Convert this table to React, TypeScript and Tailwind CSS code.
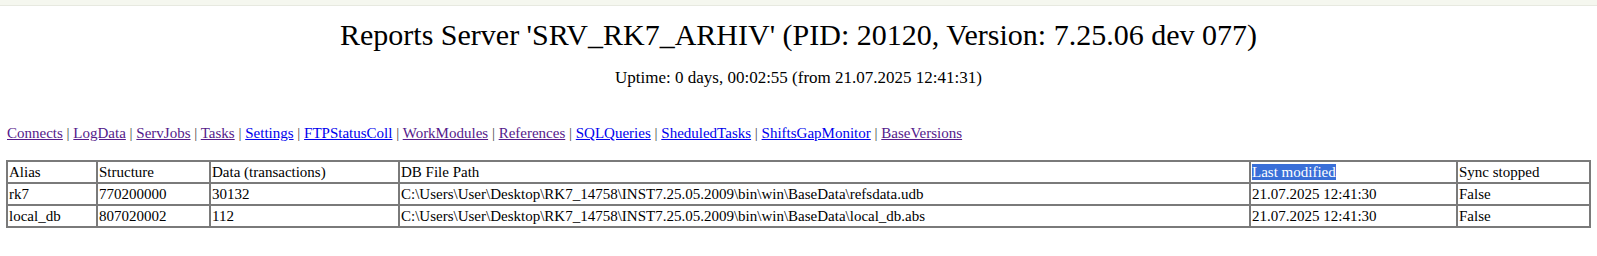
const links: { label: string; visited: boolean }[] = [
  { label: 'Connects', visited: true },
  { label: 'LogData', visited: true },
  { label: 'ServJobs', visited: true },
  { label: 'Tasks', visited: true },
  { label: 'Settings', visited: false },
  { label: 'FTPStatusColl', visited: false },
  { label: 'WorkModules', visited: true },
  { label: 'References', visited: true },
  { label: 'SQLQueries', visited: false },
  { label: 'SheduledTasks', visited: false },
  { label: 'ShiftsGapMonitor', visited: false },
  { label: 'BaseVersions', visited: true },
];

const rows = [
  {
    alias: 'rk7',
    structure: '770200000',
    data: '30132',
    path: 'C:\\Users\\User\\Desktop\\RK7_14758\\INST7.25.05.2009\\bin\\win\\BaseData\\refsdata.udb',
    modified: '21.07.2025 12:41:30',
    stopped: 'False',
  },
  {
    alias: 'local_db',
    structure: '807020002',
    data: '112',
    path: 'C:\\Users\\User\\Desktop\\RK7_14758\\INST7.25.05.2009\\bin\\win\\BaseData\\local_db.abs',
    modified: '21.07.2025 12:41:30',
    stopped: 'False',
  },
];

const cell =
  'border border-[#7a7a7a] px-px py-px text-left font-normal align-top whitespace-nowrap leading-[18px]';

export default function App() {
  return (
    <div className="w-[1597px] h-[256px] bg-white text-black font-['Liberation_Serif','Times_New_Roman',serif] text-[15px] leading-[1.15] overflow-hidden">
      <div className="h-[6px] bg-[#f5f7ef] border-b border-[#e7e9e0]" />

      <h1 className="mt-[12px] text-center text-[30px] leading-[1.15]">
        Reports Server 'SRV_RK7_ARHIV' (PID: 20120, Version: 7.25.06 dev 077)
      </h1>

      <p className="mt-[15px] text-center text-[17px]">Uptime: 0 days, 00:02:55 (from 21.07.2025 12:41:31)</p>

      <p className="mt-[38px] px-[7px] text-[#444]">
        {links.map((l, i) => (
          <span key={l.label}>
            <a
              href="#"
              className={l.visited ? 'underline text-[#551a8b]' : 'underline text-[#0000ee]'}
            >
              {l.label}
            </a>
            {i < links.length - 1 && ' | '}
          </span>
        ))}
      </p>

      <table className="mt-[18px] ml-[6px] w-[1585px] table-fixed border-separate border-spacing-0 border border-[#7a7a7a]">
        <thead>
          <tr>
            <th className={`${cell} w-[90px]`}>Alias</th>
            <th className={`${cell} w-[113px]`}>Structure</th>
            <th className={`${cell} w-[189px]`}>Data (transactions)</th>
            <th className={`${cell} w-[851px]`}>DB File Path</th>
            <th className={`${cell} w-[207px]`}>
              <span className="bg-[#3a6fd8] text-white">Last modified</span>
            </th>
            <th className={cell}>Sync stopped</th>
          </tr>
        </thead>
        <tbody>
          {rows.map((r) => (
            <tr key={r.alias}>
              <td className={cell}>{r.alias}</td>
              <td className={cell}>{r.structure}</td>
              <td className={cell}>{r.data}</td>
              <td className={cell}>{r.path}</td>
              <td className={cell}>{r.modified}</td>
              <td className={cell}>{r.stopped}</td>
            </tr>
          ))}
        </tbody>
      </table>
    </div>
  );
}
